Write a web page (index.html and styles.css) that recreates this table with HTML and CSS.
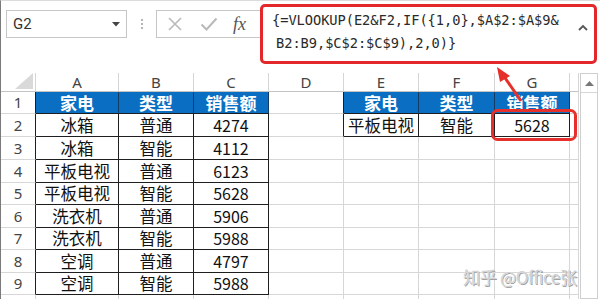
FILE: index.html
```html
<!DOCTYPE html>
<html lang="zh">
<head>
<meta charset="utf-8">
<title>VLOOKUP</title>
<link rel="stylesheet" href="styles.css">
</head>
<body>
<div class="app">
  <div class="fbar">
    <div class="namebox">
      <span class="nb-text">G2</span>
      <svg class="nb-drop" width="8" height="5" viewBox="0 0 8 5"><path d="M0 0H8L4 4.5Z" fill="#444"/></svg>
    </div>
    <div class="dots"><i></i><i></i><i></i></div>
    <div class="btns">
      <svg width="16" height="14" viewBox="0 0 16 14"><path d="M2 1L14 13M14 1L2 13" stroke="#b9b9b9" stroke-width="1.6" fill="none"/></svg>
      <svg width="18" height="14" viewBox="0 0 18 14"><path d="M1.5 7.5L6.5 12.5L16.5 1.5" stroke="#b9b9b9" stroke-width="2" fill="none"/></svg>
      <span class="fx">fx</span>
    </div>
    <div class="formula">
      <div class="ftext">{=VLOOKUP(E2&amp;F2,IF({1,0},$A$2:$A$9&amp;<br><span class="l2">B2:B9,$C$2:$C$9),2,0)}</span></div>
      <svg class="caret" width="10" height="7" viewBox="0 0 10 7"><path d="M1 6L5 2L9 6" stroke="#555" stroke-width="1.8" fill="none"/></svg>
    </div>
  </div>
  <div class="main">
    <div class="grid">
      <div class="ch corner"><div class="tri"></div></div>
      <div class="ch">A</div><div class="ch">B</div><div class="ch">C</div><div class="ch">D</div>
      <div class="ch">E</div><div class="ch">F</div><div class="ch">G</div><div class="ch"></div>

      <div class="c rh lb">1</div>
      <div class="c hd">家电</div><div class="c hd">类型</div><div class="c hd">销售额</div><div class="c lb"></div>
      <div class="c hd">家电</div><div class="c hd">类型</div><div class="c hd">销售额</div><div class="c"></div>

      <div class="c rh lb">2</div>
      <div class="c b">冰箱</div><div class="c b">普通</div><div class="c b n">4274</div><div class="c lb"></div>
      <div class="c b">平板电视</div><div class="c b">智能</div><div class="c b n">5628</div><div class="c"></div>

      <div class="c rh lb">3</div>
      <div class="c b">冰箱</div><div class="c b">智能</div><div class="c b n">4112</div><div class="c"></div>
      <div class="c"></div><div class="c"></div><div class="c"></div><div class="c"></div>

      <div class="c rh lb">4</div>
      <div class="c b">平板电视</div><div class="c b">普通</div><div class="c b n">6123</div><div class="c"></div>
      <div class="c"></div><div class="c"></div><div class="c"></div><div class="c"></div>

      <div class="c rh lb">5</div>
      <div class="c b">平板电视</div><div class="c b">智能</div><div class="c b n">5628</div><div class="c"></div>
      <div class="c"></div><div class="c"></div><div class="c"></div><div class="c"></div>

      <div class="c rh lb">6</div>
      <div class="c b">洗衣机</div><div class="c b">普通</div><div class="c b n">5906</div><div class="c"></div>
      <div class="c"></div><div class="c"></div><div class="c"></div><div class="c"></div>

      <div class="c rh lb">7</div>
      <div class="c b">洗衣机</div><div class="c b">智能</div><div class="c b n">5988</div><div class="c"></div>
      <div class="c"></div><div class="c"></div><div class="c"></div><div class="c"></div>

      <div class="c rh lb">8</div>
      <div class="c b">空调</div><div class="c b">普通</div><div class="c b n">4797</div><div class="c"></div>
      <div class="c"></div><div class="c"></div><div class="c"></div><div class="c"></div>

      <div class="c rh lb">9</div>
      <div class="c b">空调</div><div class="c b">智能</div><div class="c b n">5988</div><div class="c"></div>
      <div class="c"></div><div class="c"></div><div class="c"></div><div class="c"></div>

      <div class="c rh"></div>
      <div class="c"></div><div class="c"></div><div class="c"></div><div class="c"></div>
      <div class="c"></div><div class="c"></div><div class="c"></div><div class="c"></div>
    </div>
    <div class="vscroll">
      <div class="sb-up"><svg width="9" height="5" viewBox="0 0 9 5"><path d="M0 5L4.5 0L9 5Z" fill="#777"/></svg></div>
    </div>
  </div>
  <svg class="overlay" width="600" height="299" viewBox="0 0 600 299">
    <rect x="492.5" y="110.5" width="83" height="29" rx="5" ry="5" fill="none" stroke="#e5302c" stroke-width="3"/>
    <path d="M521 101L503 75" stroke="#e5302c" stroke-width="3" fill="none"/>
    <path d="M497 67L510 76L500 82Z" fill="#e5302c"/>
  </svg>
  <div class="watermark">知乎 @Office张</div>
</div>
</body>
</html>
```

FILE: styles.css
```css
html, body {
  margin: 0;
  padding: 0;
  background: #fff;
}

.app {
  position: relative;
  width: 599px;
  height: 298px;
  border-left: 1px solid #7a7a7a;
  border-top: 1px solid #dcdcdc;
  overflow: hidden;
  font-family: "Noto Sans CJK SC", "Noto Sans", sans-serif;
  color: #111;
}

/* formula bar */
.fbar {
  height: 72px;
  display: flex;
  align-items: flex-start;
}

.namebox {
  box-sizing: border-box;
  width: 121px;
  height: 28px;
  margin: 9px 0 0 5px;
  border: 1px solid #c6c6c6;
  display: flex;
  align-items: center;
  justify-content: space-between;
  padding: 0 6px 0 6px;
}

.nb-text {
  font-family: "Roboto", "Noto Sans", sans-serif;
  font-size: 15px;
  color: #333;
}

.nb-drop {
  margin-top: 1px;
}

.dots {
  width: 29px;
  margin-top: 18px;
  display: flex;
  flex-direction: column;
  align-items: center;
  gap: 2px;
}

.dots i {
  display: block;
  width: 2px;
  height: 2px;
  background: #b5b5b5;
}

.btns {
  box-sizing: border-box;
  width: 104px;
  height: 28px;
  margin-top: 9px;
  border: 1px solid #c6c6c6;
  border-right: none;
  display: flex;
  align-items: center;
  padding-left: 10px;
  gap: 17px;
}

.fx {
  font-family: "Liberation Serif", "DejaVu Serif", serif;
  font-style: italic;
  font-size: 18px;
  color: #555;
  margin-left: -2px;
}

.formula {
  box-sizing: border-box;
  width: 337px;
  height: 60px;
  margin-top: 3px;
  border: 3px solid #e2282a;
  border-radius: 5px;
  display: flex;
  justify-content: space-between;
  padding: 2px 6px 0 9px;
}

.ftext {
  font-family: "DejaVu Sans Mono", "Liberation Mono", monospace;
  font-size: 13.7px;
  line-height: 23px;
  color: #2a2a2a;
  white-space: nowrap;
  letter-spacing: -0.05px;
}

.l2 {
  padding-left: 4px;
}

.caret {
  margin-top: 15px;
}

/* sheet */
.main {
  display: flex;
  align-items: flex-start;
}

.grid {
  display: grid;
  grid-template-columns: 35px 83px 75px 75px 75px 75px 76px 75px 9px;
  grid-template-rows: 19px 22px 23px 23px 23px 22px 23px 22px 23px 22px 12px;
}

.grid > div {
  box-sizing: border-box;
  display: flex;
  align-items: center;
  justify-content: center;
}

.ch {
  border-right: 1px solid #d5d5d5;
  border-bottom: 1px solid #c4c4c4;
  font-family: "Noto Sans", "Roboto", sans-serif;
  font-size: 15px;
  line-height: 18px;
  color: #444;
}

.corner {
  align-items: flex-end !important;
  justify-content: flex-end !important;
  padding: 0 2px 2px 0;
}

.tri {
  width: 18px;
  height: 16px;
  background: #d9d9d9;
  clip-path: polygon(100% 0, 100% 100%, 0 100%);
}

.c {
  border-right: 1px solid #d7d7d7;
  border-bottom: 1px solid #d7d7d7;
  font-size: 16.5px;
  line-height: 21px;
}

.rh {
  font-family: "Noto Sans", "Roboto", sans-serif;
  font-size: 15px;
  color: #444;
}

.c.lb {
  border-right-color: #1e1e1e;
}

.c.b {
  border-right-color: #1e1e1e;
  border-bottom-color: #1e1e1e;
}

.c.hd {
  background: #0a6fc2;
  color: #fff;
  font-weight: 700;
  font-size: 17px;
  border-right-color: #123c66;
  border-bottom-color: #1e1e1e;
}

.c.n {
  font-size: 16px;
}

.vscroll {
  box-sizing: border-box;
  width: 18px;
  height: 226px;
  margin-left: 1px;
  border: 1px solid #cfcfcf;
}

.sb-up {
  height: 18px;
  border-bottom: 1px solid #d6d6d6;
  display: flex;
  align-items: center;
  justify-content: center;
}

.overlay {
  position: absolute;
  left: -1px;
  top: -1px;
  pointer-events: none;
}

.watermark {
  position: absolute;
  left: 462px;
  top: 264px;
  font-size: 17px;
  line-height: 24px;
  color: #d2d2d2;
  text-shadow: 0 0 1px #fff, 1px 1px 0 #9a9a9a;
  white-space: nowrap;
  letter-spacing: -0.3px;
}
```
